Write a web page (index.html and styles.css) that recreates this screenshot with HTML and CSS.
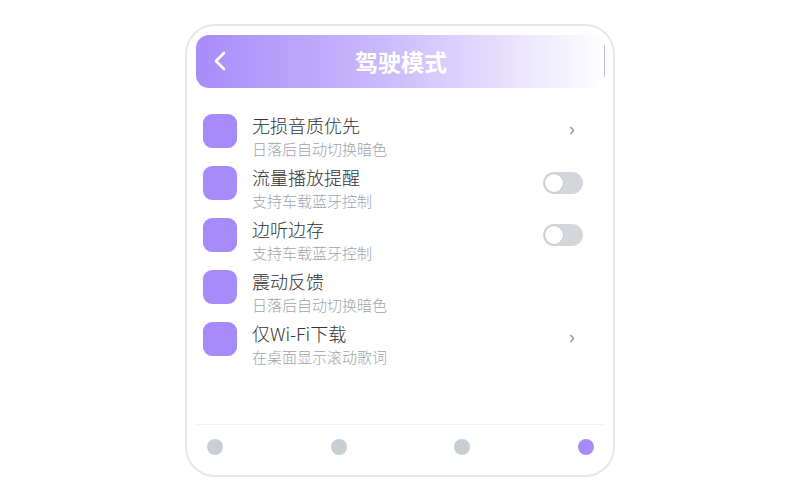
FILE: index.html
```html
<!DOCTYPE html>
<html lang="zh-CN">
<head>
    <meta charset="UTF-8">
    <meta name="viewport" content="width=device-width, initial-scale=1.0">
    <title>驾驶模式</title>
    <link rel="stylesheet" href="styles.css">
</head>
<body>
    <div class="phone">
        <div class="header">
            <svg class="back" width="14" height="20" viewBox="0 0 14 20">
                <polyline points="11,2 3,10 11,18" fill="none" stroke="#fff" stroke-width="2.6" stroke-linecap="round" stroke-linejoin="round"/>
            </svg>
            <h1 class="title">驾驶模式</h1>
            <span class="edge"></span>
        </div>

        <div class="list">
            <div class="row">
                <div class="icon"></div>
                <div class="text">
                    <div class="name">无损音质优先</div>
                    <div class="desc">日落后自动切换暗色</div>
                </div>
                <div class="tail">
                    <svg class="arrow" width="6" height="9" viewBox="0 0 6 9"><polyline points="1.5,1 4.5,4.5 1.5,8" fill="none" stroke="#8e939b" stroke-width="1.3"/></svg>
                </div>
            </div>
            <div class="row">
                <div class="icon"></div>
                <div class="text">
                    <div class="name">流量播放提醒</div>
                    <div class="desc">支持车载蓝牙控制</div>
                </div>
                <div class="tail"><span class="switch"><span class="knob"></span></span></div>
            </div>
            <div class="row">
                <div class="icon"></div>
                <div class="text">
                    <div class="name">边听边存</div>
                    <div class="desc">支持车载蓝牙控制</div>
                </div>
                <div class="tail"><span class="switch"><span class="knob"></span></span></div>
            </div>
            <div class="row">
                <div class="icon"></div>
                <div class="text">
                    <div class="name">震动反馈</div>
                    <div class="desc">日落后自动切换暗色</div>
                </div>
            </div>
            <div class="row">
                <div class="icon"></div>
                <div class="text">
                    <div class="name">仅Wi-Fi下载</div>
                    <div class="desc">在桌面显示滚动歌词</div>
                </div>
                <div class="tail">
                    <svg class="arrow" width="6" height="9" viewBox="0 0 6 9"><polyline points="1.5,1 4.5,4.5 1.5,8" fill="none" stroke="#8e939b" stroke-width="1.3"/></svg>
                </div>
            </div>
        </div>

        <div class="tabbar">
            <span class="dot"></span>
            <span class="dot"></span>
            <span class="dot"></span>
            <span class="dot active"></span>
        </div>
    </div>
</body>
</html>
```

FILE: styles.css
```css
body {
    margin: 0;
    height: 500px;
    background: #fff;
    font-family: "Noto Sans CJK SC", "Noto Sans", sans-serif;
    display: flex;
    align-items: center;
    justify-content: center;
}
.phone {
    width: 430px;
    height: 453px;
    box-sizing: border-box;
    border: 2px solid #e6e7eb;
    border-radius: 30px;
    display: flex;
    flex-direction: column;
    overflow: hidden;
}
.header {
    margin: 9px 7px 0 9px;
    height: 53px;
    border-radius: 13px;
    background: linear-gradient(90deg, #a78bfa 0%, #c9b9fc 45%, #ffffff 100%);
    display: grid;
    grid-template-columns: 40px 1fr 40px;
    align-items: center;
}
.back {
    margin-left: 17px;
}
.title {
    margin: 0;
    text-align: center;
    color: #fff;
    font-size: 23px;
    font-weight: 700;
    line-height: 53px;
}
.edge {
    justify-self: end;
    width: 1px;
    height: 32px;
    margin-right: 1px;
    background: #c8b8f8;
}
.list {
    flex: 1;
    margin-top: 26px;
    padding: 0 30px 0 16px;
}
.row {
    height: 52px;
    display: flex;
    align-items: flex-start;
}
.icon {
    width: 34px;
    height: 34px;
    border-radius: 9px;
    background: #a78bfa;
    flex-shrink: 0;
}
.text {
    margin-left: 15px;
    margin-top: -2px;
}
.name {
    font-size: 18px;
    line-height: 26px;
    color: #333;
    font-weight: 300;
}
.desc {
    font-size: 15px;
    line-height: 22px;
    color: #a0a4ab;
    font-weight: 300;
}
.tail {
    margin-left: auto;
    width: 40px;
    height: 34px;
    display: flex;
    align-items: center;
    justify-content: flex-end;
}
.arrow {
    margin-right: 8px;
}
.switch {
    width: 40px;
    height: 22px;
    border-radius: 11px;
    background: #d4d6dc;
    display: flex;
    align-items: center;
    padding-left: 2px;
    box-sizing: border-box;
}
.knob {
    width: 18px;
    height: 18px;
    border-radius: 50%;
    background: #fff;
    box-shadow: 0 0 0 1px #c7c9d0;
}
.tabbar {
    margin: 0 10px;
    border-top: 1px solid #eef0f3;
    padding: 14px 9px 20px 10px;
    display: flex;
    justify-content: space-between;
}
.dot {
    width: 16px;
    height: 16px;
    border-radius: 50%;
    background: #c9cdd4;
}
.dot.active {
    background: #a78bfa;
}
```
